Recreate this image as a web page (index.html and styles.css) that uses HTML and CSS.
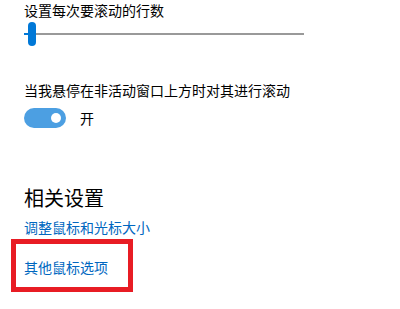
FILE: index.html
```html
<!DOCTYPE html>
<html>
<head>
    <title>鼠标设置</title>
    <link rel="stylesheet" href="styles.css">
</head>
<body>
    <div class="page">
        <div class="label">设置每次要滚动的行数</div>
        <div class="slider">
            <div class="track"><div class="fill"></div></div>
            <div class="thumb"></div>
        </div>

        <div class="label label-gap">当我悬停在非活动窗口上方时对其进行滚动</div>
        <div class="toggle-row">
            <div class="toggle"><div class="knob"></div></div>
            <span class="toggle-text">开</span>
        </div>

        <h2 class="section-title">相关设置</h2>
        <a class="link" href="#">调整鼠标和光标大小</a>
        <div class="highlight">
            <a class="link" href="#">其他鼠标选项</a>
        </div>
    </div>
</body>
</html>
```

FILE: styles.css
```css
body {
    margin: 0;
    background-color: #fff;
    font-family: "Noto Sans CJK SC", "Microsoft YaHei", sans-serif;
    color: #000;
}
.page {
    padding-left: 24px;
    width: 280px;
}
.label {
    font-size: 14px;
    line-height: 20px;
}
.label-gap {
    margin-top: 34px;
}
.slider {
    position: relative;
    height: 24px;
    margin-top: 2px;
}
.track {
    position: absolute;
    left: 0;
    right: 0;
    top: 11px;
    height: 2px;
    background-color: #999;
}
.fill {
    width: 6px;
    height: 2px;
    background-color: #0078d7;
}
.thumb {
    position: absolute;
    left: 4px;
    top: 0;
    width: 8px;
    height: 24px;
    border-radius: 4px;
    background-color: #0078d7;
}
.toggle-row {
    display: flex;
    align-items: center;
    margin-top: 8px;
    height: 20px;
}
.toggle {
    width: 42px;
    height: 20px;
    border-radius: 10px;
    background-color: #4c9fe2;
    display: flex;
    align-items: center;
    justify-content: flex-end;
    padding-right: 5px;
    box-sizing: border-box;
}
.knob {
    width: 10px;
    height: 10px;
    border-radius: 50%;
    background-color: #fff;
}
.toggle-text {
    margin-left: 14px;
    font-size: 14px;
}
.section-title {
    margin: 56px 0 0;
    font-size: 20px;
    line-height: 28px;
    font-weight: normal;
}
.link {
    display: block;
    margin-top: 5px;
    font-size: 14px;
    line-height: 20px;
    color: #0067c0;
    text-decoration: none;
}
.highlight {
    box-sizing: border-box;
    margin: 2px 0 0 -13px;
    width: 122px;
    border: 5px solid #e81c24;
    padding: 13px 0 10px 8px;
}
.highlight .link {
    margin-top: 0;
}
```
